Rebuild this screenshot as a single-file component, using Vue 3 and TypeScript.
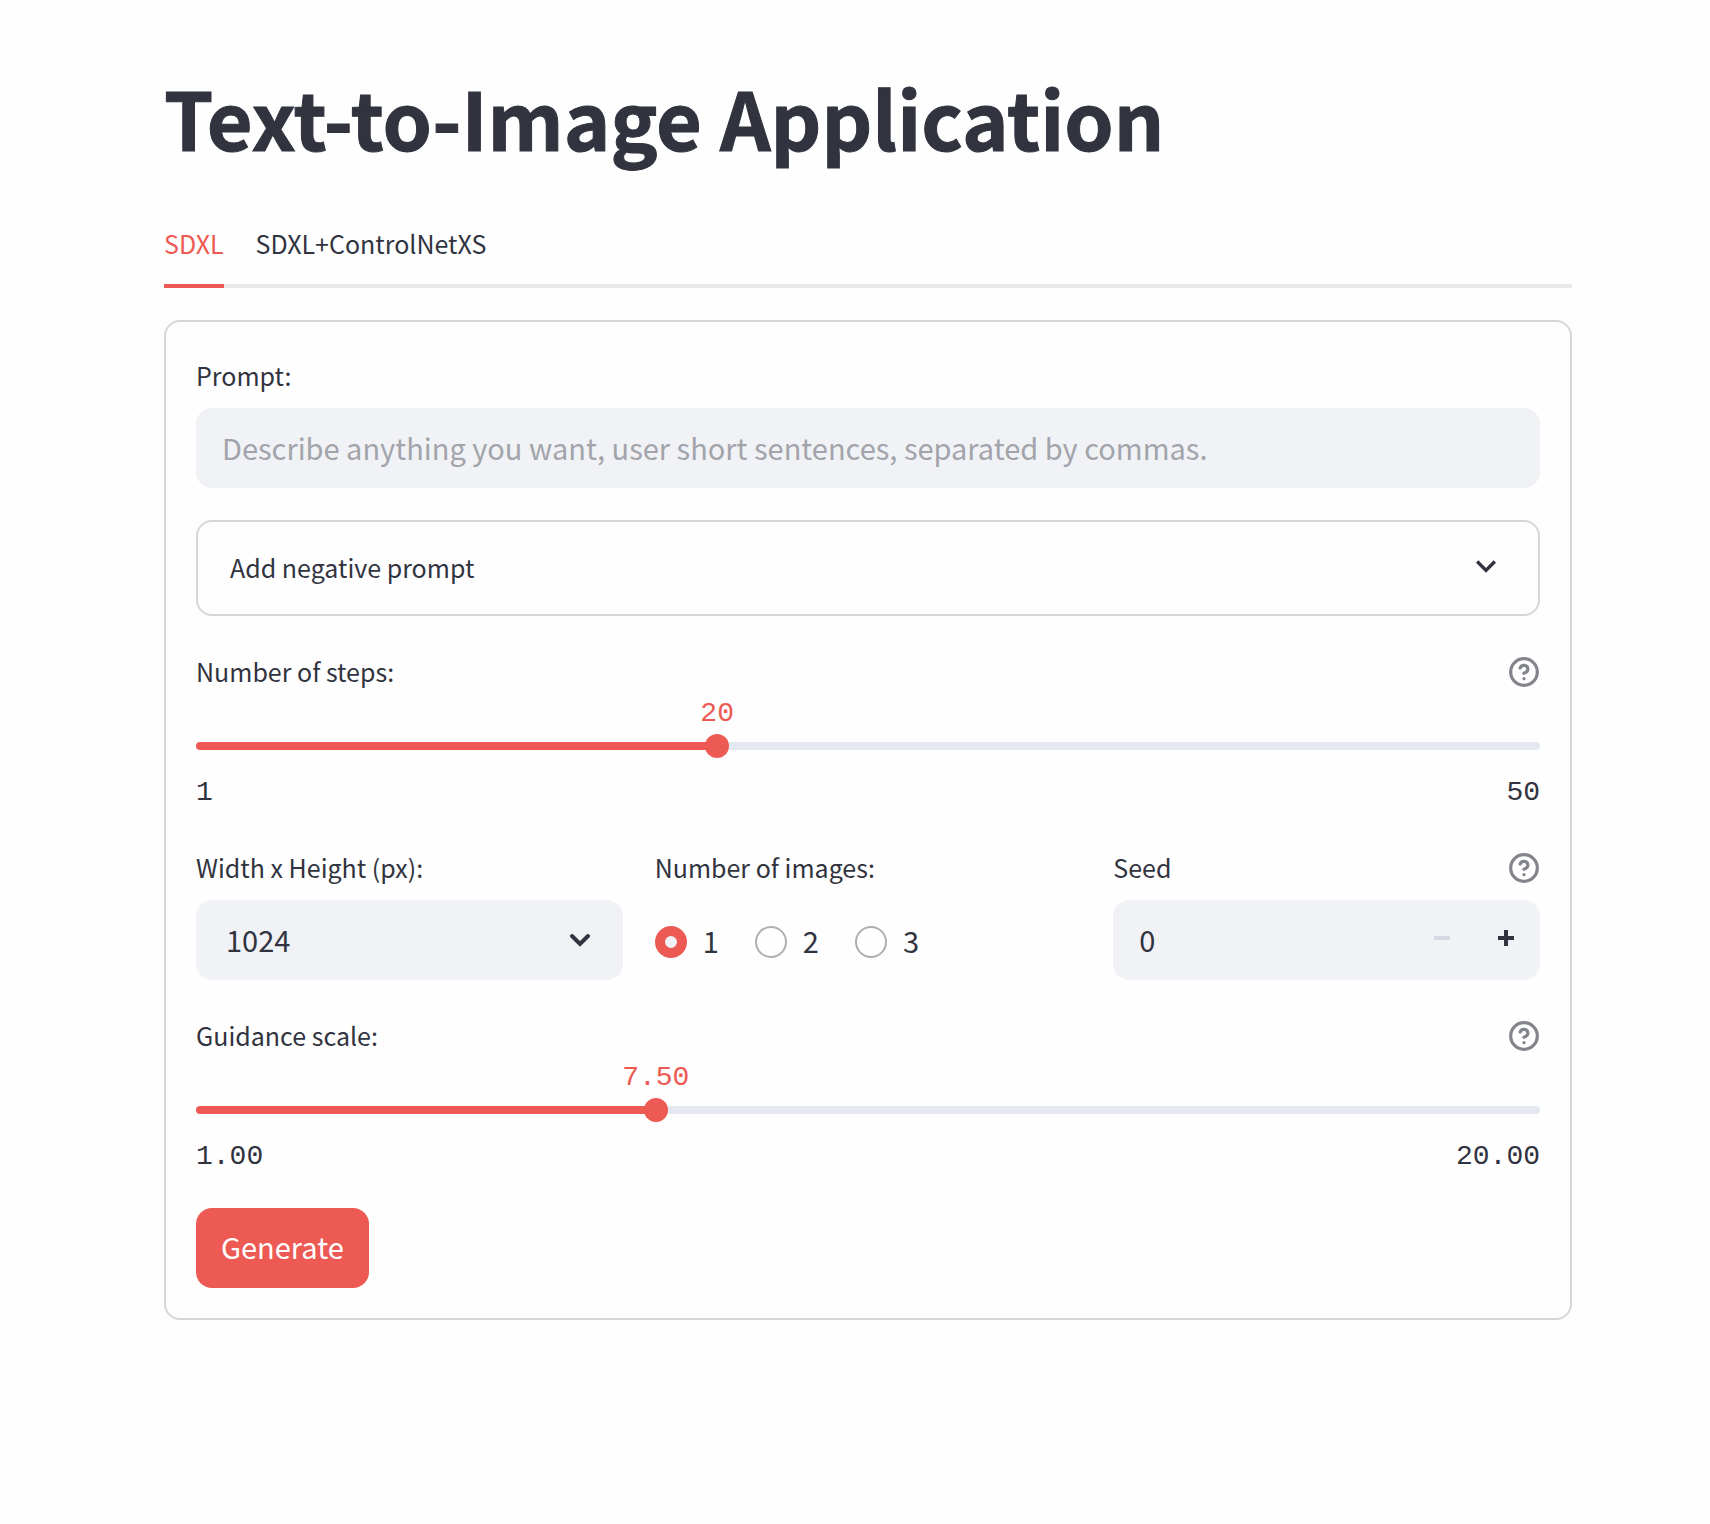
<script setup lang="ts">
import { computed, ref } from 'vue'

const tabs: string[] = ['SDXL', 'SDXL+ControlNetXS']
const activeTab = ref(0)

const prompt = ref('')
const negativePrompt = ref('')
const steps = ref(20)
const guidance = ref(7.5)
const size = ref('1024')
const imageCount = ref(1)
const seed = ref(0)

const stepsPercent = computed(() => ((steps.value - 1) / 49) * 100)
const guidancePercent = computed(() => ((guidance.value - 1) / 19) * 100)

function fill(percent: number) {
  return { background: `linear-gradient(to right, #ed5a53 ${percent}%, #e4e8f0 ${percent}%)` }
}
</script>

<template>
  <main class="page">
    <h1>Text-to-Image Application</h1>

    <div class="tabs" role="tablist">
      <button
        v-for="(tab, i) in tabs"
        :key="tab"
        type="button"
        role="tab"
        class="tab"
        :class="{ active: i === activeTab }"
        :aria-selected="i === activeTab"
        @click="activeTab = i"
      >{{ tab }}</button>
    </div>

    <form class="form" @submit.prevent>
      <div class="field">
        <div class="label-row"><label for="prompt">Prompt:</label></div>
        <input
          id="prompt"
          v-model="prompt"
          class="text-input"
          type="text"
          placeholder="Describe anything you want, user short sentences, separated by commas."
        />
      </div>

      <details class="expander">
        <summary>
          <span>Add negative prompt</span>
          <svg class="expander-icon" viewBox="0 0 24 24" aria-hidden="true">
            <path d="M7.41 8.59L12 13.17l4.59-4.58L18 10l-6 6-6-6 1.41-1.41z" />
          </svg>
        </summary>
        <div class="expander-body">
          <input v-model="negativePrompt" class="text-input" type="text" aria-label="Negative prompt" />
        </div>
      </details>

      <div class="field">
        <div class="label-row">
          <label for="steps">Number of steps:</label>
          <button type="button" class="help" aria-label="Help for number of steps">
            <svg viewBox="0 0 24 24" stroke-width="2.4" aria-hidden="true">
              <circle cx="12" cy="12" r="10" />
              <path d="M9.09 9a3 3 0 0 1 5.83 1c0 2-3 3-3 3M12 17h.01" />
            </svg>
          </button>
        </div>
        <div class="value-row">
          <output for="steps" :style="{ left: stepsPercent + '%' }">{{ steps }}</output>
        </div>
        <div class="track" :style="fill(stepsPercent)">
          <input id="steps" v-model.number="steps" type="range" min="1" max="50" step="1" />
        </div>
        <div class="bounds"><span>1</span><span>50</span></div>
      </div>

      <div class="columns">
        <div class="field">
          <div class="label-row"><label for="size">Width x Height (px):</label></div>
          <div class="select-box">
            <select id="size" v-model="size">
              <option>512</option>
              <option>768</option>
              <option>1024</option>
            </select>
            <svg class="select-icon" viewBox="0 0 32 32" aria-hidden="true">
              <path d="M8 12l8 8 8-8" />
            </svg>
          </div>
        </div>

        <div class="field" role="radiogroup" aria-labelledby="images-label">
          <div class="label-row"><span id="images-label">Number of images:</span></div>
          <div class="radios">
            <label v-for="n in 3" :key="n" class="radio">
              <input v-model="imageCount" type="radio" name="images" :value="n" />
              <span>{{ n }}</span>
            </label>
          </div>
        </div>

        <div class="field">
          <div class="label-row">
            <label for="seed">Seed</label>
            <button type="button" class="help" aria-label="Help for seed">
              <svg viewBox="0 0 24 24" stroke-width="2.4" aria-hidden="true">
                <circle cx="12" cy="12" r="10" />
                <path d="M9.09 9a3 3 0 0 1 5.83 1c0 2-3 3-3 3M12 17h.01" />
              </svg>
            </button>
          </div>
          <div class="number-box">
            <input id="seed" v-model.number="seed" type="number" min="0" />
            <button type="button" class="step" :disabled="seed <= 0" aria-label="Decrease seed" @click="seed--">
              <svg viewBox="0 0 16 16" aria-hidden="true"><path d="M0 6h16v4H0z" /></svg>
            </button>
            <button type="button" class="step" aria-label="Increase seed" @click="seed++">
              <svg viewBox="0 0 16 16" aria-hidden="true"><path d="M6 0h4v6h6v4h-6v6H6v-6H0V6h6z" /></svg>
            </button>
          </div>
        </div>
      </div>

      <div class="field">
        <div class="label-row">
          <label for="guidance">Guidance scale:</label>
          <button type="button" class="help" aria-label="Help for guidance scale">
            <svg viewBox="0 0 24 24" stroke-width="2.4" aria-hidden="true">
              <circle cx="12" cy="12" r="10" />
              <path d="M9.09 9a3 3 0 0 1 5.83 1c0 2-3 3-3 3M12 17h.01" />
            </svg>
          </button>
        </div>
        <div class="value-row">
          <output for="guidance" :style="{ left: guidancePercent + '%' }">{{ guidance.toFixed(2) }}</output>
        </div>
        <div class="track" :style="fill(guidancePercent)">
          <input id="guidance" v-model.number="guidance" type="range" min="1" max="20" step="0.1" />
        </div>
        <div class="bounds"><span>1.00</span><span>20.00</span></div>
      </div>

      <button type="submit" class="submit">Generate</button>
    </form>
  </main>
</template>

<style>
body {
  margin: 0;
  background: #fefefe;
}
</style>

<style scoped>
.page,
.page * {
  box-sizing: border-box;
}

.page {
  padding: 64px 138px 64px 164px;
  color: #31333f;
  font-family: "Noto Sans CJK SC", "Noto Sans", sans-serif;
  font-size: 25px;
}

button,
input,
select {
  font: inherit;
  color: inherit;
  border: 0;
  margin: 0;
  padding: 0;
  background: none;
}

button {
  cursor: pointer;
}

h1 {
  margin: 0 0 34px;
  font-size: 79px;
  font-weight: 700;
  line-height: 106px;
  -webkit-text-stroke: 1px #31333f;
}

.tabs {
  display: flex;
  gap: 32px;
  box-shadow: inset 0 -4px #e9e9e9;
}

.tab {
  height: 84px;
  padding-bottom: 2px;
  border-bottom: 4px solid transparent;
  line-height: 78px;
}

.tab.active {
  color: #ed5a53;
  border-bottom-color: #ed5a53;
}

.form {
  display: flex;
  flex-direction: column;
  gap: 32px;
  margin-top: 32px;
  padding: 30px;
  border: 2px solid #d6d6d8;
  border-radius: 16px;
}

.label-row {
  display: flex;
  align-items: flex-start;
  justify-content: space-between;
  height: 48px;
  line-height: 46px;
}

.help {
  display: flex;
  margin-top: 8px;
}

.help svg {
  width: 32px;
  height: 32px;
  fill: none;
  stroke: #83858c;
  stroke-linecap: round;
  stroke-linejoin: round;
}

.text-input {
  display: block;
  width: 100%;
  height: 80px;
  margin-top: 8px;
  padding: 0 26px 2px;
  border-radius: 16px;
  background: #f0f2f6;
  font-size: 29px;
}

.text-input::placeholder {
  color: #a3a4ab;
  opacity: 1;
}

.expander {
  border: 2px solid #d6d6d8;
  border-radius: 16px;
}

.expander summary {
  display: flex;
  align-items: flex-start;
  justify-content: space-between;
  min-height: 92px;
  padding: 24px 32px;
  line-height: 42px;
  list-style: none;
  cursor: pointer;
}

.expander-icon {
  width: 40px;
  height: 40px;
  fill: #31333f;
}

.expander-body {
  padding: 0 32px 32px;
}

.value-row {
  position: relative;
  height: 34px;
  margin-bottom: 12px;
}

.value-row output {
  position: absolute;
  top: 0;
  transform: translateX(-50%);
  color: #ed5a53;
  font-family: "Liberation Mono", monospace;
  font-size: 28px;
  line-height: 36px;
}

.track {
  position: relative;
  height: 8px;
  border-radius: 4px;
}

.track input {
  position: absolute;
  top: -8px;
  left: -12px;
  width: calc(100% + 24px);
  height: 24px;
  appearance: none;
  cursor: pointer;
}

.track input::-webkit-slider-thumb {
  appearance: none;
  width: 24px;
  height: 24px;
  border-radius: 50%;
  background: #ed5a53;
}

.bounds {
  display: flex;
  justify-content: space-between;
  margin-top: 24px;
  font-family: "Liberation Mono", monospace;
  font-size: 28px;
  line-height: 38px;
}

.columns {
  display: grid;
  grid-template-columns: repeat(3, minmax(0, 1fr));
  gap: 32px;
}

.select-box,
.number-box,
.radios {
  display: flex;
  height: 80px;
  margin-top: 8px;
  font-size: 29px;
}

.select-box,
.number-box {
  border-radius: 16px;
  background: #f0f2f6;
}

.select-box {
  position: relative;
}

.select-box select {
  width: 100%;
  padding: 0 30px 2px;
  appearance: none;
}

.select-icon {
  position: absolute;
  top: 24px;
  right: 27px;
  width: 32px;
  height: 32px;
  fill: none;
  stroke: #31333f;
  stroke-width: 4;
  stroke-linecap: round;
  pointer-events: none;
}

.radios {
  align-items: center;
  gap: 36px;
  padding-top: 4px;
}

.radio {
  display: flex;
  align-items: center;
  gap: 16px;
}

.radio span {
  padding-bottom: 4px;
}

.radio input {
  width: 32px;
  height: 32px;
  border: 2px solid #adaeb3;
  border-radius: 50%;
  appearance: none;
}

.radio input:checked {
  border: 10px solid #ed5a53;
  background: #f0f2f6;
}

.number-box {
  padding-right: 2px;
}

.number-box input {
  flex: 1;
  min-width: 0;
  padding: 0 0 2px 26px;
  appearance: textfield;
}

.number-box input::-webkit-inner-spin-button {
  appearance: none;
}

.step {
  width: 64px;
  height: 76px;
}

.step svg {
  display: block;
  width: 16px;
  height: 16px;
  margin: 0 auto;
  fill: #31333f;
}

.step:disabled svg {
  fill: #d5dae5;
}

.submit {
  align-self: flex-start;
  height: 80px;
  padding: 0 25px 4px;
  border-radius: 16px;
  background: #ed5a53;
  color: #fff;
  font-size: 29px;
}
</style>
